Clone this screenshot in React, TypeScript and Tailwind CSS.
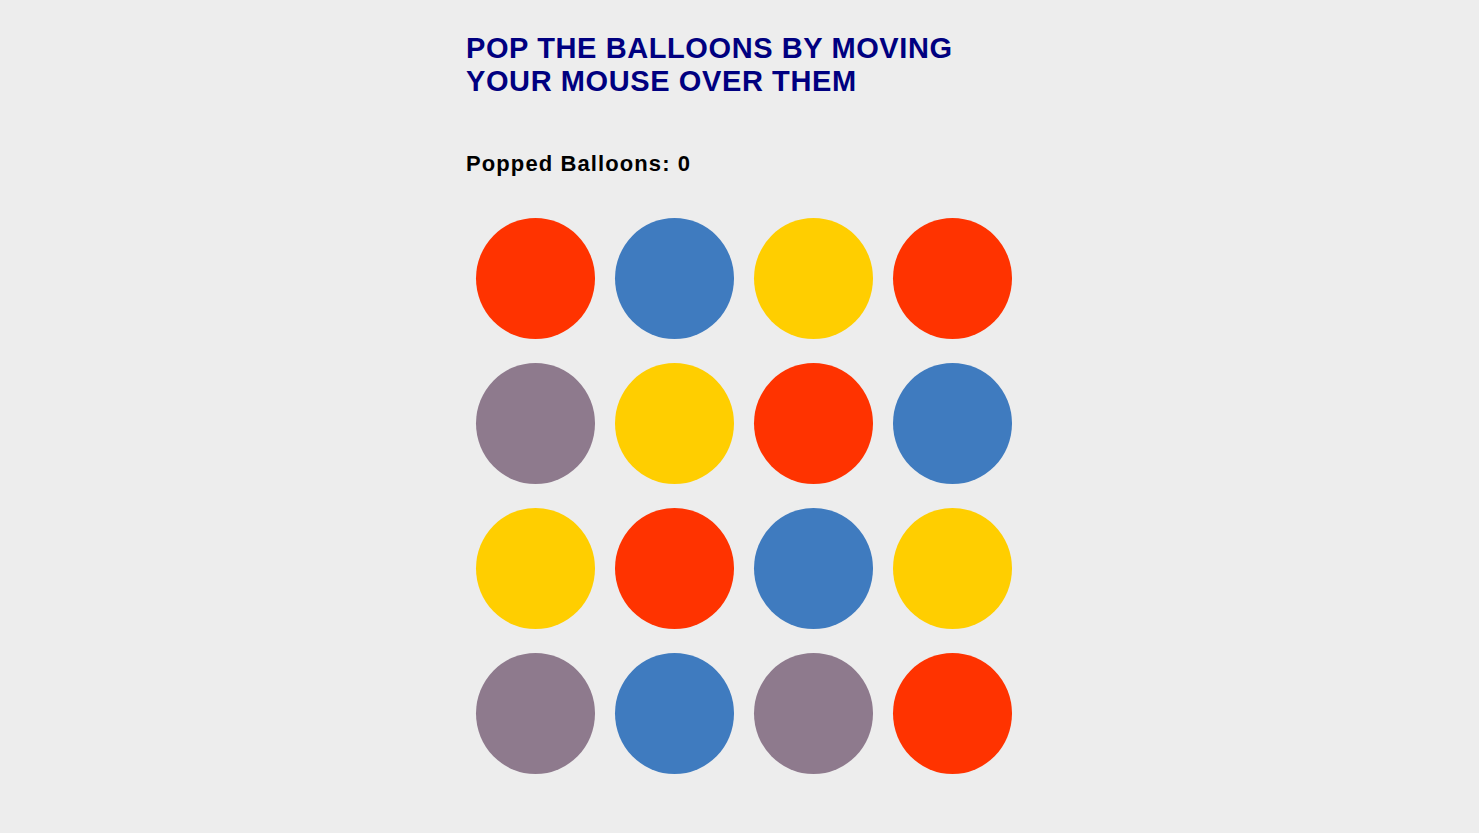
import React, { useState } from "react";

const colors: Record<string, string> = {
  red: "bg-[#ff3300]",
  blue: "bg-[#3f7bbf]",
  yellow: "bg-[#ffce00]",
  grey: "bg-[#8e7a8d]",
};

const balloons = [
  "red", "blue", "yellow", "red",
  "grey", "yellow", "red", "blue",
  "yellow", "red", "blue", "yellow",
  "grey", "blue", "grey", "red",
];

export default function App() {
  const [popped, setPopped] = useState<boolean[]>(balloons.map(() => false));
  const count = popped.filter(Boolean).length;

  const pop = (i: number) => {
    if (popped[i]) return;
    setPopped((p) => p.map((v, j) => (j === i ? true : v)));
  };

  return (
    <div className="min-h-screen bg-[#ededed] font-['Liberation_Sans',Arial,sans-serif]">
      <div className="mx-auto w-[547px] pt-[32px] pb-10">
        <h1 className="text-[29px] leading-[1.15] font-bold tracking-[0.6px] text-[#000080] whitespace-nowrap">
          POP THE BALLOONS BY MOVING
          <br />
          YOUR MOUSE OVER THEM
        </h1>
        <p className="mt-[52px] text-[22px] leading-[1.15] font-bold tracking-[1.1px] text-black">
          Popped Balloons: {count}
        </p>
        <div className="mt-[42px] pl-[10px] grid grid-cols-[repeat(4,119px)] gap-x-[20px] gap-y-[24px]">
          {balloons.map((c, i) => (
            <div
              key={i}
              onMouseEnter={() => pop(i)}
              className={`w-[119px] h-[121px] rounded-[50%] ${colors[c]} ${
                popped[i] ? "invisible" : ""
              }`}
            />
          ))}
        </div>
      </div>
    </div>
  );
}
